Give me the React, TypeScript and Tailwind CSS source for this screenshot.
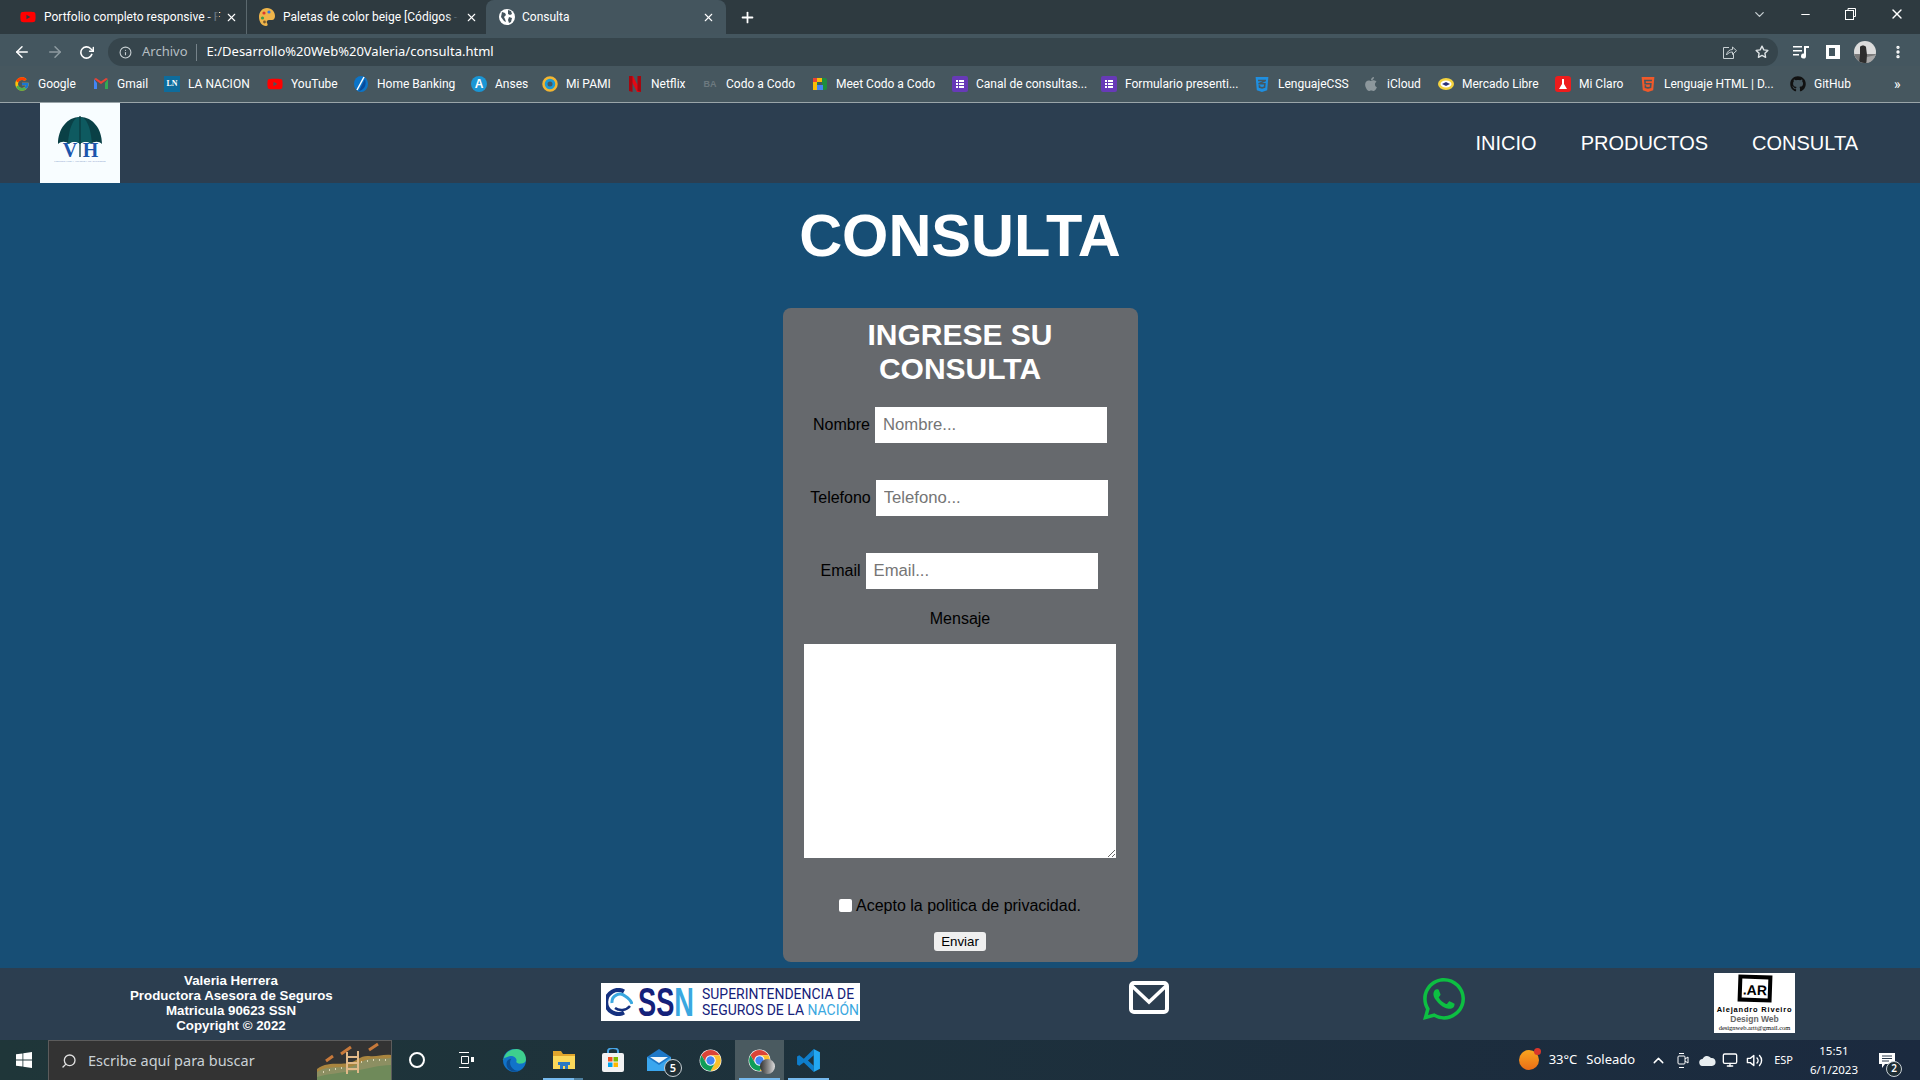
import React from 'react';
import { FaWhatsapp, FaApple, FaGithub, FaYoutube, FaCss3Alt, FaHtml5 } from 'react-icons/fa';
import { FcGoogle } from 'react-icons/fc';
import { FiSearch, FiInfo, FiStar, FiMoreVertical, FiChevronDown, FiChevronUp, FiX, FiPlus, FiMinus, FiArrowLeft, FiArrowRight, FiRotateCw, FiVolume2, FiMonitor } from 'react-icons/fi';

const ChromeLogo = ({ size = 24 }: { size?: number }) => (
    <svg width={size} height={size} viewBox="0 0 24 24">
        <circle cx="12" cy="12" r="10.5" fill="#fff" />
        <path d="M3.34 7A10 10 0 0 1 20.66 7H12a5 5 0 0 0-4.33 7.5z" fill="#db4437" />
        <path d="M20.66 7A10 10 0 0 1 12 22l4.33-7.5A5 5 0 0 0 12 7z" fill="#fbc02d" />
        <path d="M3.34 7A10 10 0 0 0 12 22l4.33-7.5a5 5 0 0 1-8.66 0z" fill="#0f9d58" />
        <circle cx="12" cy="12" r="4" fill="#4285f4" />
    </svg>
);

const GlobeIcon = () => (
    <svg width="16" height="16" viewBox="0 0 16 16">
        <circle cx="8" cy="8" r="8" fill="#fff" />
        <path d="M3 3l3 1 1 2-2 2 1 2 1 3-2-1-3-4zM9 1l3 1 1 3-2 1-2-1zM10 8l3 1-1 4-2 1-1-3z" fill="#44555e" />
    </svg>
);

const PaletteIcon = () => (
    <svg width="16" height="18" viewBox="0 0 16 18">
        <path d="M8 0C3 0 0 4 0 9s3 9 7 9c2 0 2-2 1-3s0-3 2-3h3c2 0 3-2 3-4 0-4-3-8-8-8z" fill="#efb54a" />
        <circle cx="5" cy="5" r="1.6" fill="#d93a30" />
        <circle cx="10" cy="4" r="1.6" fill="#3b78d8" />
        <circle cx="3.5" cy="10" r="1.6" fill="#3e9f4b" />
        <circle cx="5.5" cy="14" r="1.4" fill="#7a5a2c" />
    </svg>
);

const FormsIcon = () => (
    <svg width="16" height="16" viewBox="0 0 16 16">
        <rect x="0" y="0" width="16" height="16" rx="2" fill="#673ab7" />
        <rect x="4" y="4" width="2" height="2" fill="#fff" />
        <rect x="7" y="4" width="5" height="2" fill="#fff" />
        <rect x="4" y="7" width="2" height="2" fill="#fff" />
        <rect x="7" y="7" width="5" height="2" fill="#fff" />
        <rect x="4" y="10" width="2" height="2" fill="#fff" />
        <rect x="7" y="10" width="5" height="2" fill="#fff" />
    </svg>
);

const bookmarks: { label: string; w: string; icon: React.ReactNode; gap: string }[] = [
    { label: 'Google', w: 'w-[39px]', gap: 'ml-[14px]', icon: <FcGoogle size={16} /> },
    {
        label: 'Gmail', w: 'w-[30px]', gap: 'ml-[16px]', icon: (
            <svg width="16" height="16" viewBox="0 0 16 16">
                <path d="M1 3v10h3V7z" fill="#4285f4" />
                <path d="M12 7v6h3V3z" fill="#34a853" />
                <path d="M1 3l7 5 7-5-2-1-5 3.500L3 2z" fill="#ea4335" />
            </svg>
        ),
    },
    {
        label: 'LA NACION', w: 'w-[62px]', gap: 'ml-[17px]', icon: (
            <span className="flex h-4 w-4 items-center justify-center bg-[#0e6c9c] font-['Liberation_Serif',serif] text-[8px] font-bold text-white">LN</span>
        ),
    },
    { label: 'YouTube', w: 'w-[46px]', gap: 'ml-[17px]', icon: <FaYoutube size={16} color="#ff0000" /> },
    {
        label: 'Home Banking', w: 'w-[78px]', gap: 'ml-[16px]', icon: (
            <svg width="16" height="16" viewBox="0 0 16 16">
                <ellipse cx="8" cy="8" rx="7" ry="8" fill="#0b74c8" />
                <path d="M12 3c2 6-1 11-6 12z" fill="#0a4a9a" />
                <path d="M11 1L4 14" stroke="#fff" strokeWidth="1.5" />
            </svg>
        ),
    },
    {
        label: 'Anses', w: 'w-[31px]', gap: 'ml-[16px]', icon: (
            <span className="flex h-4 w-4 items-center justify-center rounded-full bg-[#1b96d4] font-['Liberation_Sans',sans-serif] text-[12px] font-bold text-white">A</span>
        ),
    },
    {
        label: 'Mi PAMI', w: 'w-[45px]', gap: 'ml-[16px]', icon: (
            <svg width="16" height="16" viewBox="0 0 16 16">
                <circle cx="8" cy="8" r="6.500" fill="#1c9ad6" stroke="#f2b632" strokeWidth="2.500" />
                <circle cx="8" cy="8" r="2.500" fill="#46575f" />
            </svg>
        ),
    },
    {
        label: 'Netflix', w: 'w-[35px]', gap: 'ml-[16px]', icon: (
            <svg width="12" height="16" viewBox="0 0 12 16">
                <path d="M0 0h4l8 16H8z" fill="#e50914" />
                <path d="M0 0h3.500v16L0 15zM8.500 0H12v16l-3.500-1z" fill="#a50710" />
            </svg>
        ),
    },
    {
        label: 'Codo a Codo', w: 'w-[69px]', gap: 'ml-[16px]', icon: (
            <span className="flex h-4 w-4 items-center justify-center font-['Liberation_Sans',sans-serif] text-[9px] font-bold text-[#6d7a80]">BA</span>
        ),
    },
    {
        label: 'Meet Codo a Codo', w: 'w-[100px]', gap: 'ml-[17px]', icon: (
            <svg width="16" height="16" viewBox="0 0 16 16">
                <rect x="1" y="2" width="14" height="12" rx="2" fill="#1e8e3e" />
                <path d="M1 2h9v4H5v8H1z" fill="#fbbc04" />
                <path d="M1 2h4v4H1z" fill="#ea4335" />
                <path d="M5 9h6v5H5z" fill="#4285f4" />
                <rect x="6" y="6" width="4" height="3" fill="#46575f" />
            </svg>
        ),
    },
    { label: 'Canal de consultas...', w: 'w-[108px]', gap: 'ml-[16px]', icon: <FormsIcon /> },
    { label: 'Formulario presenti...', w: 'w-[112px]', gap: 'ml-[17px]', icon: <FormsIcon /> },
    { label: 'LenguajeCSS', w: 'w-[68px]', gap: 'ml-[17px]', icon: <FaCss3Alt size={17} color="#1f8fe0" /> },
    { label: 'iCloud', w: 'w-[34px]', gap: 'ml-[17px]', icon: <FaApple size={16} color="#8c979c" /> },
    {
        label: 'Mercado Libre', w: 'w-[76px]', gap: 'ml-[17px]', icon: (
            <svg width="16" height="16" viewBox="0 0 16 16">
                <ellipse cx="8" cy="8" rx="8" ry="6" fill="#f5d33e" />
                <ellipse cx="8" cy="8" rx="5.500" ry="3.500" fill="#fff" />
                <path d="M4 8l4-2 4 2-4 2z" fill="#2d3277" />
            </svg>
        ),
    },
    {
        label: 'Mi Claro', w: 'w-[44px]', gap: 'ml-[17px]', icon: (
            <svg width="16" height="16" viewBox="0 0 16 16">
                <rect width="16" height="16" rx="3" fill="#ee1c1c" />
                <path d="M7 3h2v5l3 5H4l3-5z" fill="#fff" />
            </svg>
        ),
    },
    { label: 'Lenguaje HTML | D...', w: 'w-[109px]', gap: 'ml-[17px]', icon: <FaHtml5 size={17} color="#f0592a" /> },
    {
        label: 'GitHub', w: 'w-[37px]', gap: 'ml-[17px]', icon: <FaGithub size={16} color="#111" />,
    },
];

const TaskCell = ({ children, active, line }: { children: React.ReactNode; active?: boolean; line?: boolean }) => (
    <div className={active ? 'relative flex h-10 w-[49px] items-center justify-center bg-[#4a5a60]' : 'relative flex h-10 w-[49px] items-center justify-center'}>
        {children}
        {line && <span className="absolute bottom-0 left-[4px] right-[4px] h-[2px] bg-[#76b9ed]" />}
    </div>
);

const FormRow = ({ label, type = 'text', pad = '' }: { label: string; type?: string; pad?: string }) => (
    <div className={`flex items-center justify-center gap-[5px] ${pad}`}>
        <label className="text-black">{label}</label>
        <input
            type={type}
            placeholder={`${label}...`}
            className="h-9 w-[232px] bg-white px-2 text-[16.7px] text-black outline-none placeholder:text-[#757575]"
        />
    </div>
);

export default function App() {
    return (
        <div className="flex h-[1080px] w-[1920px] flex-col overflow-hidden font-['Liberation_Sans',Arial,sans-serif] text-base text-white">
            {/* pestañas */}
            <div className="flex h-[34px] shrink-0 items-end bg-[#2e3a40] font-['Roboto',sans-serif] text-xs">
                <div className="ml-[20px] flex h-[34px] w-[227px] items-center border-r border-[#5b686e]">
                    <FaYoutube size={16} color="#ff0000" />
                    <span className="relative ml-2 w-[175px] whitespace-nowrap">
                        Portfolio completo responsive - F
                        <span className="absolute inset-y-0 right-0 w-3 bg-linear-to-r from-transparent to-[#2e3a40]" />
                    </span>
                    <FiX size={13} className="ml-[6px]" />
                </div>
                <div className="flex h-[34px] w-[239px] items-center pl-[12px]">
                    <PaletteIcon />
                    <span className="relative ml-[8px] w-[175px] whitespace-nowrap">
                        Paletas de color beige [Códigos -
                        <span className="absolute inset-y-0 right-0 w-3 bg-linear-to-r from-transparent to-[#2e3a40]" />
                    </span>
                    <FiX size={13} className="ml-[7px]" />
                </div>
                <div className="flex h-[34px] w-[240px] items-center rounded-t-lg bg-[#44555e] pl-[13px]">
                    <GlobeIcon />
                    <span className="ml-[7px] w-[175px]">Consulta</span>
                    <FiX size={13} className="ml-[5px]" />
                </div>
                <div className="ml-[13px] flex h-[34px] items-center">
                    <FiPlus size={17} strokeWidth={2.5} />
                </div>
                <div className="ml-auto flex h-[28px] items-center self-start">
                    <FiChevronDown size={15} className="text-[#c8d0d3]" />
                    <FiMinus size={13} className="ml-[32px]" />
                    <svg width="11" height="12" viewBox="0 0 11 12" className="ml-[33px]" fill="none" stroke="#fff">
                        <rect x="0.5" y="2.500" width="8" height="9" />
                        <path d="M3 2.500V.5h7.500v8H8.500" />
                    </svg>
                    <FiX size={16} className="ml-[33px] mr-[15px]" />
                </div>
            </div>

            {/* barra de direcciones */}
            <div className="flex h-[32px] shrink-0 items-center bg-[#44565f] pt-[4px] font-['Noto_Sans',sans-serif]">
                <FiArrowLeft size={18} className="ml-[13px]" />
                <FiArrowRight size={18} className="ml-[15px] text-[#8e9ba1]" />
                <FiRotateCw size={15} className="ml-[15px]" strokeWidth={2.5} />
                <div className="ml-[14px] flex h-7 w-[1670px] items-center rounded-full bg-[#36454c] text-[13px]">
                    <FiInfo size={13} className="ml-[11px] text-[#c8d0d3]" />
                    <span className="ml-[10px] text-[#b5bec2]">Archivo</span>
                    <span className="ml-2 h-[17px] w-px bg-[#76838a]" />
                    <span className="ml-[10px]">E:/Desarrollo%20Web%20Valeria/consulta.html</span>
                    <svg width="15" height="15" viewBox="0 0 15 15" className="ml-auto" fill="none" stroke="#c8d0d3">
                        <path d="M7 2.500H1.500v11h10V9" />
                        <path d="M4.500 10c.5-3.500 3-5.500 6-5.500V2l4 3.700-4 3.700V7c-2.500 0-4.500 1-6 3z" />
                    </svg>
                    <FiStar size={14} strokeWidth={2.4} className="ml-[18px] mr-[9px] text-[#dfe4e6]" />
                </div>
                <svg width="16" height="14" viewBox="0 0 16 14" className="ml-[15px]" fill="#fff">
                    <path d="M0 1h9v1.500H0zM0 5h9v1.500H0zM0 9h6v1.500H0zM11 1h5v2h-3v8a2.500 2.500 0 1 1-2-2.400z" />
                </svg>
                <span className="ml-[17px] h-3.5 w-3.5 border-[3px] border-r-[5px] border-white" />
                <svg width="22" height="22" viewBox="0 0 22 22" className="ml-[14px]">
                    <clipPath id="avatar">
                        <circle cx="11" cy="11" r="11" />
                    </clipPath>
                    <g clipPath="url(#avatar)">
                        <rect width="22" height="22" fill="#dcdcdc" />
                        <rect y="13" width="22" height="9" fill="#7b7b7b" />
                        <path d="M6 6c1-2 5-2 6 0l1 8-1 8H5l1-8z" fill="#2d2d2d" />
                        <path d="M13 16l9-2v8h-9z" fill="#a8a8a8" />
                    </g>
                </svg>
                <FiMoreVertical size={16} className="ml-[14px]" strokeWidth={3} />
            </div>

            {/* marcadores */}
            <div className="flex h-[37px] shrink-0 items-center border-b border-[#9aa5a9] bg-[#46575f] font-['Roboto',sans-serif] text-xs">
                {bookmarks.map((b) => (
                    <div key={b.label} className={`flex items-center ${b.gap}`}>
                        <span className="flex w-4 items-center justify-center">{b.icon}</span>
                        <span className={`ml-2 whitespace-nowrap ${b.w}`}>{b.label}</span>
                    </div>
                ))}
                <span className="ml-[43px] text-sm">»</span>
            </div>

            {/* nav */}
            <nav className="flex h-20 shrink-0 items-start bg-[#2c3e50]">
                <div className="ml-10 h-20 w-20 bg-[#f8fdff]">
                    <svg width="80" height="80" viewBox="0 0 80 80">
                        <path d="M40 14C27 14 18 26 18 41c3-3 8-3 11 0 3-3 8-3 11 0 3-3 8-3 11 0 3-3 8-3 11 0 0-15-9-27-22-27z" fill="#0a4046" />
                        <path d="M40 14c-7 0-11 12-12 27 3-3 9-3 12 0 3-3 9-3 12 0-1-15-5-27-12-27z" fill="#0e5a60" />
                        <path d="M40 13v41" stroke="#0b3b40" strokeWidth="1.300" />
                        <text x="30" y="54" fontFamily="Liberation Serif, serif" fontWeight="700" fontSize="20" fill="#1b55ad" textAnchor="middle">V</text>
                        <text x="50.500" y="54" fontFamily="Liberation Serif, serif" fontWeight="700" fontSize="20" fill="#1b55ad" textAnchor="middle">H</text>
                        <text x="40" y="59" fontFamily="Liberation Serif, serif" fontSize="2.900" fill="#5a7ab5" textAnchor="middle">PRODUCTORA ASESORA DE SEGUROS</text>
                    </svg>
                </div>
                <ul className="ml-auto mr-[62px] flex h-20 items-center gap-[44px] text-xl">
                    <li>INICIO</li>
                    <li>PRODUCTOS</li>
                    <li>CONSULTA</li>
                </ul>
            </nav>

            {/* contenido */}
            <main className="flex h-[785px] shrink-0 flex-col items-center bg-[#174e75] pt-[20px]">
                <h1 className="h-[66px] text-[59.5px] leading-[66px] font-bold">CONSULTA</h1>
                <form className="mt-[39px] flex h-[654px] w-[355px] flex-col rounded-lg bg-[#66696d] pt-[10px]">
                    <h2 className="mx-auto w-[220px] text-center text-[30px] leading-[34px] font-bold">INGRESE SU CONSULTA</h2>
                    <div className="mt-[21px] flex flex-col gap-[37px]">
                        <FormRow label="Nombre" />
                        <FormRow label="Telefono" pad="pr-[2px]" />
                        <FormRow label="Email" type="email" pad="pr-[2px]" />
                    </div>
                    <label className="mt-[18px] text-center text-black">Mensaje</label>
                    <textarea className="mx-auto mt-[13px] block h-[214px] w-[312px] bg-white text-black outline-none" />
                    <div className="mt-[36px] flex items-center justify-center">
                        <input type="checkbox" className="m-0 mb-[2px] h-[13px] w-[13px] appearance-none rounded-[2px] bg-white" />
                        <span className="ml-[4px] text-black">Acepto la politica de privacidad.</span>
                    </div>
                    <button type="button" className="mx-auto mt-[14px] h-[19px] w-[52px] rounded-[3px] bg-[#efefef] text-[13.3px] leading-[19px] text-black">Enviar</button>
                </form>
            </main>

            {/* footer */}
            <footer className="flex h-[72px] shrink-0 items-start bg-[#2c3e50]">
                <div className="ml-[130px] mt-[5px] w-[202px] text-center text-[13.3px] leading-[15px] font-bold whitespace-nowrap">
                    <p>Valeria Herrera</p>
                    <p>Productora Asesora de Seguros</p>
                    <p>Matricula 90623 SSN</p>
                    <p>Copyright © 2022</p>
                </div>
                <div className="ml-[269px] mt-[15px] flex h-[38px] w-[259px] shrink-0 items-center bg-white">
                    <svg width="27" height="28" viewBox="0 0 27 28" className="ml-[5px] shrink-0" fill="none">
                        <path d="M18 3.500A12 12 0 1 0 18 24.500" stroke="#14307f" strokeWidth="4" />
                        <path d="M6 15a8 8 0 0 1 13-7c3 2 6 4 7 8" stroke="#3aa8e0" strokeWidth="3" />
                        <path d="M9 20c4 3 11 3 15-2" stroke="#14307f" strokeWidth="2.500" />
                    </svg>
                    <span className="ml-[5px] w-[57px] shrink-0 origin-left scale-x-[0.68] font-['Liberation_Sans',sans-serif] text-[40px] leading-none font-bold whitespace-nowrap text-[#14217a]">SS<span className="text-[#3aa8e0]">N</span></span>
                    <div className="ml-[7px] w-[152px] shrink-0 origin-left scale-x-[0.9] font-['Roboto',sans-serif] text-[15.500px] leading-[16px] whitespace-nowrap text-[#14217a]">
                        <p>SUPERINTENDENCIA DE</p>
                        <p>SEGUROS DE LA <span className="text-[#3aa8e0]">NACIÓN</span></p>
                    </div>
                </div>
                <svg width="40" height="33" viewBox="0 0 40 33" className="ml-[269px] mt-[13px]" fill="none" stroke="#fff">
                    <rect x="2" y="2" width="36" height="29" rx="3" strokeWidth="4" />
                    <path d="M3 5l17 16L37 5" strokeWidth="3.500" />
                </svg>
                <FaWhatsapp size={48} color="#0dbf42" className="ml-[251px] mt-[7px]" />
                <div className="ml-[246px] mt-[5px] flex h-[60px] w-[81px] flex-col items-center bg-white text-black">
                    <div className="mt-[2px] flex h-[27px] w-[34px] rotate-[2deg] items-end justify-center border-[4px] border-black bg-white pb-[1px] font-['Liberation_Sans',sans-serif] text-[14px] leading-none font-bold">.AR</div>
                    <p className="mt-[3px] text-[7.500px] leading-[9px] font-bold tracking-[0.8px] whitespace-nowrap">Alejandro Riveiro</p>
                    <p className="text-[8.500px] leading-[10px] font-bold text-[#666]">Design Web</p>
                    <p className="font-['Liberation_Serif',serif] text-[6.500px] leading-[7px] whitespace-nowrap">designweb.artt@gmail.com</p>
                </div>
            </footer>

            {/* barra de tareas */}
            <div className="flex h-10 shrink-0 items-center bg-linear-to-r from-[#1f3639] to-[#1b2a3f] font-['Noto_Sans',sans-serif]">
                <svg width="16" height="16" viewBox="0 0 16 16" className="ml-4" fill="#fff">
                    <path d="M0 2.300L6.500 1.400V7.600H0zM7.300 1.300L16 0V7.600H7.300zM0 8.400H6.500V14.600L0 13.700zM7.300 8.400H16V16L7.300 14.700z" />
                </svg>
                <div className="ml-4 flex h-10 w-[344px] items-center overflow-hidden border border-b-0 border-[#5c5c5c] bg-[#333333] pl-3">
                    <FiSearch size={16} className="-scale-x-100 text-[#e0e0e0]" />
                    <span className="ml-[11px] text-[14.500px] text-[#c9d1d6]">Escribe aquí para buscar</span>
                    <svg width="74" height="40" viewBox="0 0 74 40" className="ml-auto shrink-0">
                        <path d="M0 40V28c10-8 22-4 32-6 8-2 12-8 20-7 8 1 14-2 22-1v26z" fill="#a9853f" />
                        <path d="M0 40V31c10-7 22-4 32-5 8-1 13-7 21-8 8-1 14 0 21-1v23z" fill="#8c8f62" />
                        <path d="M0 40V36c10-3 22-4 36-6 14-2 26-6 38-6v16z" fill="#6f8a5a" />
                        <path d="M6 31h1M12 29h1M18 28h1M24 27h1M44 21h1M50 20h1M56 19h1M62 19h1M68 19h1" stroke="#d8d2b0" strokeWidth="2" />
                        <path d="M30 11v22M41 10v22M30 16h11M30 22h11M30 28h11" stroke="#e2b988" strokeWidth="2" />
                        <path d="M9 20l7-5M24 13l10-7M52 9l9-6" stroke="#c8793a" strokeWidth="3" />
                    </svg>
                </div>
                <TaskCell><span className="h-4 w-4 rounded-full border-2 border-white" /></TaskCell>
                <TaskCell>
                    <svg width="16" height="16" viewBox="0 0 16 16" fill="none" stroke="#fff">
                        <path d="M1 .5h10M3.500 4.500h7v7h-7zM1 15.500h10" />
                        <rect x="13" y="5" width="3" height="5" fill="#fff" stroke="none" />
                    </svg>
                </TaskCell>
                <TaskCell>
                    <svg width="25" height="25" viewBox="0 0 24 24">
                        <circle cx="12" cy="12" r="11" fill="#1173c9" />
                        <path d="M1.500 11C3 3 10 1 14 1c5 0 9 4 9 10 0 3-3 4-6 4-2 0-4-1-3-3 0-3-4-5-7-4-3 1-5 2-6.500 3z" fill="#3ecf8e" />
                        <path d="M6 20c-3-4-2-9 3-10-2 3-2 8 3 11 2 1 4 1 5 0-3 3-8 2-11-1z" fill="#0c4f94" />
                    </svg>
                </TaskCell>
                <TaskCell>
                    <svg width="22" height="22" viewBox="0 0 22 22">
                        <path d="M0 2h8l2 3h12v15H0z" fill="#e0a52c" />
                        <path d="M0 7h22v13H0z" fill="#fbd85a" />
                        <path d="M5 13h12v3h-2v4h-3v-3h-2v3H7v-4H5z" fill="#2b78c4" />
                    </svg>
                    <span className="absolute bottom-0 left-[4px] h-[2px] w-[31px] bg-[#76b9ed]" />
                    <span className="absolute bottom-0 left-[35px] h-[2px] w-[9px] bg-[#4d7f9f]" />
                </TaskCell>
                <TaskCell>
                    <svg width="22" height="24" viewBox="0 0 22 24">
                        <path d="M6 6V3a5 3 0 0 1 10 0v3" fill="none" stroke="#48a5e6" strokeWidth="2" />
                        <rect x="0" y="5" width="22" height="19" rx="2" fill="#f2f2f2" />
                        <rect x="6" y="9" width="4.500" height="4.500" fill="#f25022" />
                        <rect x="11.500" y="9" width="4.500" height="4.500" fill="#7fba00" />
                        <rect x="6" y="14.500" width="4.500" height="4.500" fill="#00a4ef" />
                        <rect x="11.500" y="14.500" width="4.500" height="4.500" fill="#ffb900" />
                    </svg>
                </TaskCell>
                <TaskCell>
                    <svg width="24" height="22" viewBox="0 0 24 22" className="-translate-x-[3px]">
                        <path d="M0 8l12-8 12 8v14H0z" fill="#1e78c8" />
                        <path d="M3 8h18l-9 6z" fill="#f4f8fb" />
                        <path d="M0 8l12 8 12-8v14H0z" fill="#3aa6ee" />
                    </svg>
                    <span className="absolute left-[27px] top-[19px] flex h-[18px] w-[18px] items-center justify-center rounded-full border border-[#c9d1d6] bg-[#1f2e35] text-[11px] font-semibold">5</span>
                </TaskCell>
                <TaskCell><ChromeLogo size={25} /></TaskCell>
                <TaskCell active line>
                    <ChromeLogo size={25} />
                    <span className="absolute left-[25px] top-[19px] h-[15px] w-[15px] rounded-full bg-linear-to-r from-[#333] to-[#ddd]" />
                </TaskCell>
                <TaskCell line>
                    <svg width="25" height="25" viewBox="0 0 24 24">
                        <path d="M17 1L7.500 10.200 3.200 7 1 8.200v7.600L3.200 17l4.300-3.200L17 23v-6l-5.500-5L17 7z" fill="#0e7dcb" />
                        <path d="M17 1l6 3v16l-6 3z" fill="#22a7f2" />
                    </svg>
                </TaskCell>
                <div className="ml-auto flex items-center text-[13px]">
                    <span className="relative h-5 w-5 rounded-full bg-linear-to-b from-[#f8a51f] to-[#ea6d17]">
                        <span className="absolute -right-[2px] -top-[2px] h-[7px] w-[7px] rounded-full bg-[#d9362b]" />
                    </span>
                    <span className="ml-[10px]">33°C</span>
                    <span className="ml-[9px]">Soleado</span>
                    <FiChevronUp size={17} className="ml-[15px]" />
                    <svg width="12" height="17" viewBox="0 0 12 17" className="ml-[10px]" fill="none" stroke="#fff">
                        <rect x="1" y="4" width="7" height="8" rx="1" />
                        <path d="M8 7l3-2v6l-3-2M2 1.500h5M2 15.500h5" />
                    </svg>
                    <svg width="17" height="12" viewBox="0 0 17 12" className="ml-[10px]" fill="#e8edf0">
                        <path d="M4 12a3.500 3.500 0 0 1-.5-7A5 5 0 0 1 12 4a4 4 0 0 1 1 8z" />
                    </svg>
                    <FiMonitor size={16} className="ml-[6px]" />
                    <FiVolume2 size={17} className="ml-[8px]" />
                    <span className="ml-[11px] text-[11px]">ESP</span>
                    <div className="ml-[16px] w-[50px] text-center text-[11.500px] leading-[19px]">
                        <p>15:51</p>
                        <p>6/1/2023</p>
                    </div>
                    <div className="relative ml-[20px] mr-[25px] w-[16px]">
                        <svg width="16" height="15" viewBox="0 0 16 15" fill="#fff">
                            <path d="M0 0h16v11H6l-3 4v-4H0z" />
                            <path d="M3 3h10M3 5.500h10M3 8h7" stroke="#2a3b4c" strokeWidth="1" />
                        </svg>
                        <span className="absolute left-[7px] top-[8px] flex h-[16px] w-[16px] items-center justify-center rounded-full border border-[#c9d1d6] bg-[#1f2e35] text-[10px] font-semibold">2</span>
                    </div>
                </div>
            </div>
        </div>
    );
}
